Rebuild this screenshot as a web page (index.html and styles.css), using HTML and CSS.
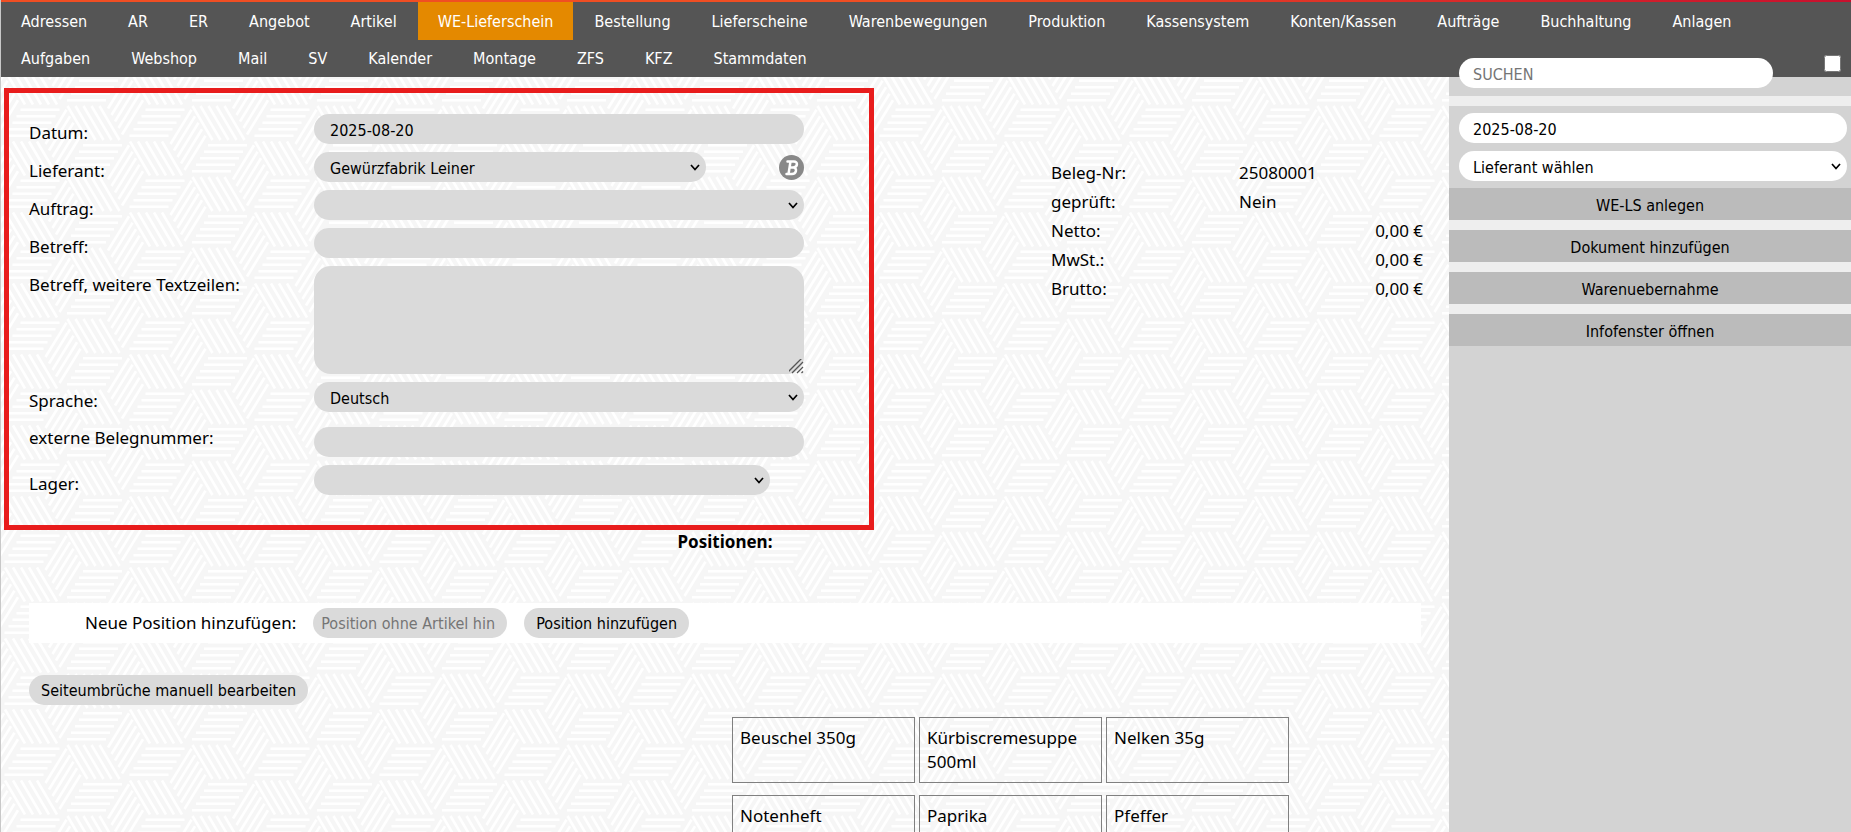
FILE: index.html
```
<!DOCTYPE html>
<html lang="de">
<head>
    <meta charset="UTF-8">
    <title>WE-Lieferschein</title>
    <link rel="stylesheet" href="styles.css">
</head>

<body>
    <header class="topbar">
        <nav>
            <ul class="menu">
                <li><a href="#">Adressen</a></li>
                <li><a href="#">AR</a></li>
                <li><a href="#">ER</a></li>
                <li><a href="#">Angebot</a></li>
                <li><a href="#">Artikel</a></li>
                <li><a href="#" class="active">WE-Lieferschein</a></li>
                <li><a href="#">Bestellung</a></li>
                <li><a href="#">Lieferscheine</a></li>
                <li><a href="#">Warenbewegungen</a></li>
                <li><a href="#">Produktion</a></li>
                <li><a href="#">Kassensystem</a></li>
                <li><a href="#">Konten/Kassen</a></li>
                <li><a href="#">Aufträge</a></li>
                <li><a href="#">Buchhaltung</a></li>
                <li><a href="#">Anlagen</a></li>
            </ul>
            <ul class="menu">
                <li><a href="#">Aufgaben</a></li>
                <li><a href="#">Webshop</a></li>
                <li><a href="#">Mail</a></li>
                <li><a href="#">SV</a></li>
                <li><a href="#">Kalender</a></li>
                <li><a href="#">Montage</a></li>
                <li><a href="#">ZFS</a></li>
                <li><a href="#">KFZ</a></li>
                <li><a href="#">Stammdaten</a></li>
            </ul>
        </nav>
    </header>

    <div class="page">
        <main class="content">
            <div class="beleg">
                <form class="kopf">
                    <div class="row">
                        <label for="datum">Datum:</label>
                        <input class="field" type="text" id="datum" value="2025-08-20">
                    </div>
                    <div class="row">
                        <label for="lieferant">Lieferant:</label>
                        <div class="lieferant">
                            <select class="field" id="lieferant">
                                <option>Gewürzfabrik Leiner</option>
                            </select>
                            <a href="#" class="badge" aria-label="Bearbeiten">
                                <svg viewBox="0 0 50 50" width="25" height="25">
                                    <circle cx="25" cy="25" r="25" fill="#888" />
                                    <path d="M17 13H30C38 13 38 23 29 25C37 26 35 38 26 38H15M23 13L19 38M21 25H29" fill="none" stroke="#fff" stroke-width="5" stroke-linecap="round" stroke-linejoin="round" />
                                </svg>
                            </a>
                        </div>
                    </div>
                    <div class="row">
                        <label for="auftrag">Auftrag:</label>
                        <select class="field" id="auftrag"><option></option></select>
                    </div>
                    <div class="row">
                        <label for="betreff">Betreff:</label>
                        <input class="field" type="text" id="betreff">
                    </div>
                    <div class="row">
                        <label for="textzeilen">Betreff, weitere Textzeilen:</label>
                        <textarea class="field" id="textzeilen"></textarea>
                    </div>
                    <div class="row">
                        <label for="sprache">Sprache:</label>
                        <select class="field" id="sprache">
                            <option>Deutsch</option>
                        </select>
                    </div>
                    <div class="row extern">
                        <label for="extern">externe Belegnummer:</label>
                        <input class="field" type="text" id="extern">
                    </div>
                    <div class="row">
                        <label for="lager">Lager:</label>
                        <select class="field lager" id="lager"><option></option></select>
                    </div>
                </form>

                <table class="summen">
                    <tr><th>Beleg-Nr:</th><td>25080001</td></tr>
                    <tr><th>geprüft:</th><td>Nein</td></tr>
                    <tr><th>Netto:</th><td class="betrag">0,00 €</td></tr>
                    <tr><th>MwSt.:</th><td class="betrag">0,00 €</td></tr>
                    <tr><th>Brutto:</th><td class="betrag">0,00 €</td></tr>
                </table>
            </div>

            <h2>Positionen:</h2>

            <form class="neu">
                <label for="position">Neue Position hinzufügen:</label>
                <input class="field" type="text" id="position" placeholder="Position ohne Artikel hin">
                <button class="btn" type="button">Position hinzufügen</button>
            </form>

            <button class="btn umbruch" type="button">Seiteumbrüche manuell bearbeiten</button>

            <div class="artikel">
                <div>Beuschel 350g</div>
                <div>Kürbiscremesuppe 500ml</div>
                <div>Nelken 35g</div>
                <div>Notenheft</div>
                <div>Paprika</div>
                <div>Pfeffer</div>
            </div>
        </main>

        <aside class="sidebar">
            <div class="suche">
                <input class="field" type="text" placeholder="SUCHEN" aria-label="Suchen">
                <input type="checkbox" aria-label="Suche fixieren">
            </div>
            <div class="anlegen">
                <input class="field" type="text" value="2025-08-20" aria-label="Datum">
                <select class="field" aria-label="Lieferant">
                    <option>Lieferant wählen</option>
                </select>
            </div>
            <div class="aktionen">
                <button type="button">WE-LS anlegen</button>
                <button type="button">Dokument hinzufügen</button>
                <button type="button">Warenuebernahme</button>
                <button type="button">Infofenster öffnen</button>
            </div>
        </aside>
    </div>
</body>
</html>
```
FILE: styles.css
```
* {
    box-sizing: border-box;
}

body {
    display: flex;
    flex-direction: column;
    height: 100vh;
    margin: 0;
    overflow: hidden;
    border-left: 1px solid #c8c8c8;
    font-family: "Noto Sans", sans-serif;
    font-size: 17px;
    line-height: 24px;
    color: #000;
    background-color: #f6f6f6;
    background-image: url("data:image/svg+xml,%3Csvg xmlns='http://www.w3.org/2000/svg' width='125' height='71'%3E%3Cdefs%3E%3Cpath id='a' stroke='%23fff' stroke-width='2.6' d='M78 28.3H117M74 34.8H113M70 41.3H109M66 47.8H105M62 54.3H101M125 24.5L145 58.5M133 24.5L153 58.5M141 24.5L161 58.5M149 24.5L169 58.5M157 24.5L177 58.5M124 28.3L103 62.5M127.5 34.8L106.5 69M131 41.3L110 75.5M134.5 47.8L113.5 82M138 54.3L117 88.5'/%3E%3C/defs%3E%3Cuse href='%23a'/%3E%3Cuse href='%23a' x='-125'/%3E%3Cuse href='%23a' x='-62.5' y='-35.5'/%3E%3Cuse href='%23a' x='62.5' y='-35.5'/%3E%3Cuse href='%23a' x='-62.5' y='35.5'/%3E%3Cuse href='%23a' x='62.5' y='35.5'/%3E%3Cuse href='%23a' y='-71'/%3E%3Cuse href='%23a' x='-125' y='-71'/%3E%3C/svg%3E");
    background-position: 5px 46px;
}

.topbar {
    height: 77px;
    flex: none;
    padding-top: 2px;
    background: linear-gradient(#555, #555) 0 2px no-repeat, linear-gradient(90deg, #f04e23 50%, #c8102e);
}

.menu {
    display: flex;
    gap: 1px;
    margin: 0;
    padding: 0;
    list-style: none;
}

.menu a {
    display: block;
    height: 37px;
    padding: 0 20px;
    line-height: 40px;
    color: #fff;
    text-decoration: none;
}

.menu a.active {
    height: 38px;
    background: #e48900;
}

.menu + .menu {
    margin-top: -1px;
}

.menu a,
.field,
.btn,
.aktionen button {
    font-family: "DejaVu Sans Condensed", "DejaVu Sans", sans-serif;
    font-size: 16px;
}

.page {
    display: flex;
    flex: 1;
    min-height: 0;
}

.content {
    flex: 1;
    min-width: 0;
    overflow: hidden;
}

/* Formularfelder */
.field {
    width: 100%;
    height: 30px;
    padding: 2px 16px 0;
    border: none;
    border-radius: 15px;
    color: #000;
    background-color: #dadada;
}

select.field {
    appearance: none;
    background-image: url("data:image/svg+xml,%3Csvg xmlns='http://www.w3.org/2000/svg' width='10' height='7'%3E%3Cpath d='M1 1L5 5.5L9 1' fill='none' stroke='%23000' stroke-width='1.7'/%3E%3C/svg%3E");
    background-repeat: no-repeat;
    background-position: right 6px center;
}

textarea.field {
    display: block;
    height: 108px;
    border-radius: 17px;
}

textarea.field::-webkit-resizer {
    background: url("data:image/svg+xml,%3Csvg xmlns='http://www.w3.org/2000/svg' width='17' height='17'%3E%3Cpath d='M0 16L16 0M5 16L16 5M10 16L16 10M14.5 16L16 14.5' stroke='%23555' stroke-width='1.3'/%3E%3C/svg%3E") right bottom no-repeat;
}

textarea.field::-webkit-scrollbar {
    width: 18px;
    height: 18px;
}

.btn {
    height: 30px;
    padding: 1px 12px 0;
    border: none;
    border-radius: 15px;
    color: #000;
    background: #dadada;
}

/* Belegkopf */
.beleg {
    display: flex;
    justify-content: space-between;
    padding: 11px 26px 0 3px;
}

.kopf {
    display: flex;
    flex-direction: column;
    flex: 0 0 870px;
    gap: 8px;
    padding: 21px 20px 30px;
    border: 5px solid #e81c1c;
}

.row {
    display: grid;
    grid-template-columns: 285px minmax(0, 490px);
    align-items: start;
}

.row label {
    padding-top: 8px;
    line-height: 22px;
}

.row.extern {
    margin-top: 7px;
}

.row.extern label {
    padding-top: 0;
}

.lieferant {
    display: flex;
    justify-content: space-between;
    align-items: center;
}

.lieferant .field {
    width: 80%;
}

.lager {
    width: 93%;
}

.badge {
    display: flex;
}

.summen {
    align-self: flex-start;
    width: 372px;
    margin-top: 70px;
    border-collapse: collapse;
}

.summen th,
.summen td {
    height: 29px;
    padding: 0;
    font-weight: normal;
    text-align: left;
}

.summen th {
    width: 188px;
}

.summen .betrag {
    text-align: right;
}

/* Positionen */
h2 {
    margin: 0;
    font-size: 17px;
    line-height: 24px;
    text-align: center;
}

.neu {
    display: flex;
    align-items: center;
    height: 40px;
    margin: 49px 28px 0;
    padding-left: 56px;
    background: #fff;
}

.neu .field {
    width: 194px;
    margin: 0 17px;
    padding: 1px 8px 0;
}

.umbruch {
    margin: 32px 28px 0;
}

.artikel {
    display: grid;
    grid-template-columns: repeat(3, 183px);
    gap: 12px 4px;
    margin: 12px 0 0 731px;
}

.artikel div {
    min-height: 65px;
    padding: 8px 7px;
    border: 1px solid #808080;
}

/* rechte Spalte */
.sidebar {
    flex: 0 0 402px;
    background: #d3d3d3;
}

.sidebar .field {
    padding-left: 14px;
    background-color: #fff;
}

.suche {
    display: flex;
    justify-content: space-between;
    align-items: flex-start;
    margin-top: -19px;
    padding: 0 10px 8px;
    border-bottom: 10px solid #eee;
}

.suche .field {
    width: 314px;
}

.suche input[type="checkbox"] {
    width: 17px;
    height: 17px;
    margin: -3px 0 0;
}

.anlegen {
    display: flex;
    flex-direction: column;
    gap: 8px;
    padding: 7px 4px 7px 10px;
}

.aktionen {
    display: flex;
    flex-direction: column;
    gap: 10px;
    background: #eee;
}

.aktionen button {
    height: 32px;
    padding: 2px 0 0;
    border: none;
    color: #000;
    background: #bbb;
}
```
